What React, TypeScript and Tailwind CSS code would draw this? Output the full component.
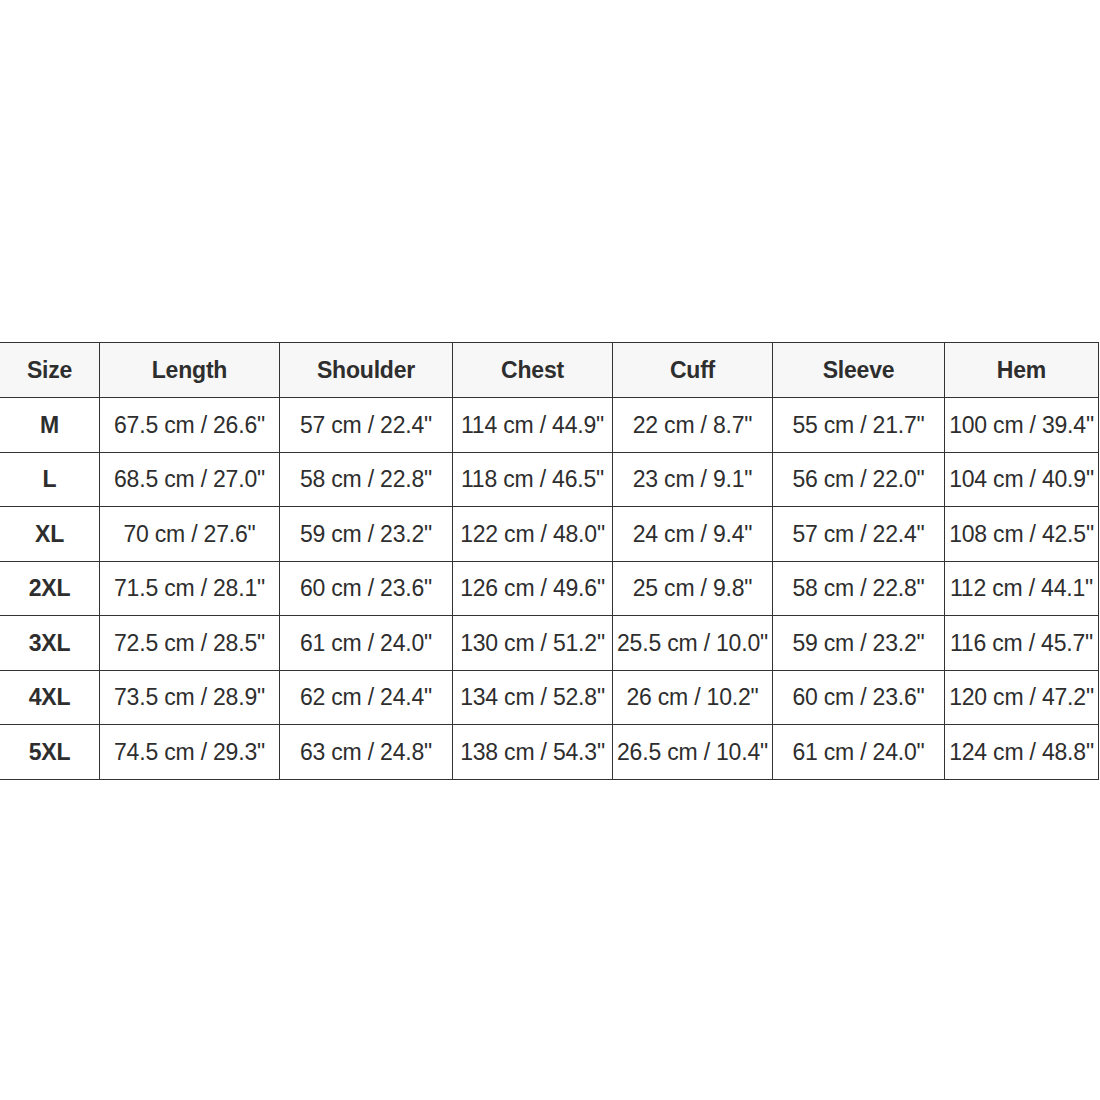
import React from 'react';

const HEADERS = ['Size', 'Length', 'Shoulder', 'Chest', 'Cuff', 'Sleeve', 'Hem'];

const COL_WIDTHS = ['w-[100px]', 'w-[180px]', 'w-[173px]', 'w-[160px]', 'w-[160px]', 'w-[172px]', 'w-[154px]'];

const ROWS: string[][] = [
  ['M', '67.5 cm / 26.6"', '57 cm / 22.4"', '114 cm / 44.9"', '22 cm / 8.7"', '55 cm / 21.7"', '100 cm / 39.4"'],
  ['L', '68.5 cm / 27.0"', '58 cm / 22.8"', '118 cm / 46.5"', '23 cm / 9.1"', '56 cm / 22.0"', '104 cm / 40.9"'],
  ['XL', '70 cm / 27.6"', '59 cm / 23.2"', '122 cm / 48.0"', '24 cm / 9.4"', '57 cm / 22.4"', '108 cm / 42.5"'],
  ['2XL', '71.5 cm / 28.1"', '60 cm / 23.6"', '126 cm / 49.6"', '25 cm / 9.8"', '58 cm / 22.8"', '112 cm / 44.1"'],
  ['3XL', '72.5 cm / 28.5"', '61 cm / 24.0"', '130 cm / 51.2"', '25.5 cm / 10.0"', '59 cm / 23.2"', '116 cm / 45.7"'],
  ['4XL', '73.5 cm / 28.9"', '62 cm / 24.4"', '134 cm / 52.8"', '26 cm / 10.2"', '60 cm / 23.6"', '120 cm / 47.2"'],
  ['5XL', '74.5 cm / 29.3"', '63 cm / 24.8"', '138 cm / 54.3"', '26.5 cm / 10.4"', '61 cm / 24.0"', '124 cm / 48.8"'],
];

const App: React.FC = () => {
  return (
    <div className="w-[1100px] h-[1100px] bg-white overflow-hidden pt-[342px] font-['Liberation_Sans',Arial,sans-serif] text-[#2e2e2e]">
      <table className="border-collapse table-fixed ml-[-1px] w-[1099px] text-[23px] tracking-[-0.2px]">
        <thead>
          <tr className="h-[55px] bg-[#f7f7f7]">
            {HEADERS.map((h, i) => (
              <th key={h} className={`${COL_WIDTHS[i]} border border-[#333] font-bold text-center p-0`}>
                {h}
              </th>
            ))}
          </tr>
        </thead>
        <tbody>
          {ROWS.map((row) => (
            <tr key={row[0]} className="h-[54.5px]">
              {row.map((cell, i) => (
                <td
                  key={i}
                  className={`border border-[#333] text-center p-0 whitespace-nowrap ${i === 0 ? 'font-bold' : ''}`}
                >
                  {cell}
                </td>
              ))}
            </tr>
          ))}
        </tbody>
      </table>
    </div>
  );
};

export default App;
